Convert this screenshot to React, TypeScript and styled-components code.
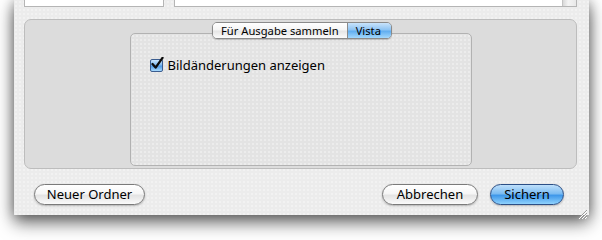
import React from 'react';
import styled, { createGlobalStyle, css } from 'styled-components';

const GlobalStyle = createGlobalStyle`
  html, body {
    margin: 0;
    padding: 0;
    background: #ffffff;
  }
  body {
    font-family: 'Noto Sans', 'DejaVu Sans', sans-serif;
  }
`;

const dots = css`
  background-image: radial-gradient(rgba(255, 255, 255, 0.5) 0.6px, transparent 0.9px);
  background-size: 4px 4px;
`;

export default function App() {
  return (
    <>
      <GlobalStyle />
      <Page>
        <SheetWindow>
          <TopRow>
            <SideList />
            <FileList>
              <ListArea />
              <ScrollTrack />
            </FileList>
          </TopRow>

          <AccessoryPanel>
            <TabStrip>
              <TabSegment>Für Ausgabe sammeln</TabSegment>
              <TabSegment $selected>Vista</TabSegment>
            </TabStrip>
            <TabBox>
              <CheckRow>
                <CheckBox>
                  <svg width="14" height="14" viewBox="0 0 14 14">
                    <path d="M2.5 7 L5.6 10.6 L12.5 0.8" fill="none" stroke="#0d0d0d" strokeWidth="2.3" strokeLinecap="round" strokeLinejoin="round" />
                  </svg>
                </CheckBox>
                <CheckLabel>Bildänderungen anzeigen</CheckLabel>
              </CheckRow>
            </TabBox>
          </AccessoryPanel>

          <Footer>
            <PushButton $width={111}>Neuer Ordner</PushButton>
            <Spacer />
            <PushButton $width={96}>Abbrechen</PushButton>
            <PushButton $width={74} $primary>Sichern</PushButton>
          </Footer>

          <Grip>
            <svg width="11" height="11" viewBox="0 0 11 11">
              <path d="M1 10 L10 1 M4 10 L10 4 M7 10 L10 7" stroke="#9a9a9a" strokeWidth="1" />
              <path d="M2 10 L10 2 M5 10 L10 5 M8 10 L10 8" stroke="#ffffff" strokeWidth="1" />
            </svg>
          </Grip>
        </SheetWindow>
      </Page>
    </>
  );
}

const Page = styled.div`
  width: 602px;
  height: 240px;
  overflow: hidden;
  padding-left: 14px;
  box-sizing: border-box;
`;

const SheetWindow = styled.div`
  position: relative;
  width: 575px;
  height: 215px;
  background-color: #ececec;
  ${dots};
  box-shadow: 0 8px 16px rgba(0, 0, 0, 0.55), 0 0 12px rgba(0, 0, 0, 0.35);
  display: flex;
  flex-direction: column;
`;

const TopRow = styled.div`
  display: flex;
  gap: 10px;
  padding: 0 12px 0 10px;
  height: 7px;
`;

const SideList = styled.div`
  width: 138px;
  background: #ffffff;
  border: 1px solid #b5b5b5;
  border-top: none;
`;

const FileList = styled.div`
  flex: 1;
  display: flex;
  border: 1px solid #b5b5b5;
  border-top: none;
  background: #ffffff;
`;

const ListArea = styled.div`
  flex: 1;
  background: #ffffff;
`;

const ScrollTrack = styled.div`
  width: 13px;
  background: linear-gradient(90deg, #d8d8d8, #f4f4f4 40%, #e8e8e8);
  border-left: 1px solid #c4c4c4;
`;

const AccessoryPanel = styled.div`
  margin: 12px 12px 0 10px;
  height: 150px;
  box-sizing: border-box;
  background-color: #dcdcdc;
  border: 1px solid #bdbdbd;
  border-radius: 7px;
  display: flex;
  flex-direction: column;
  align-items: center;
  padding-top: 2px;
`;

const TabStrip = styled.div`
  display: flex;
  height: 17px;
  margin-bottom: -6px;
  margin-left: 3px;
  position: relative;
  z-index: 1;
  border: 1px solid #8a8a8a;
  border-radius: 5px;
  overflow: hidden;
  box-sizing: border-box;
  box-shadow: 0 1px 1px rgba(0, 0, 0, 0.2);
`;

const TabSegment = styled.div<{ $selected?: boolean }>`
  display: flex;
  align-items: center;
  padding: 0 ${(p) => (p.$selected ? 10 : 8)}px 0 8px;
  font-size: 11.2px;
  line-height: 1;
  color: #000;
  background: ${(p) =>
    p.$selected
      ? 'linear-gradient(180deg, #c9e3fb 0%, #8ec4f3 45%, #61aef0 55%, #a3d8fd 100%)'
      : 'linear-gradient(180deg, #ffffff 0%, #f5f5f5 45%, #e6e6e6 55%, #fbfbfb 100%)'};
  & + & {
    border-left: 1px solid #8a8a8a;
  }
`;

const TabBox = styled.div`
  width: 342px;
  height: 133px;
  box-sizing: border-box;
  background-color: #e3e3e3;
  ${dots};
  border: 1px solid #b2b2b2;
  border-radius: 5px;
  padding: 22px 0 0 19px;
`;

const CheckRow = styled.div`
  display: flex;
  align-items: center;
  gap: 5px;
`;

const CheckBox = styled.div`
  width: 13px;
  height: 13px;
  box-sizing: border-box;
  border: 1px solid #3b5d8f;
  border-radius: 2px;
  background: linear-gradient(180deg, #cbe6fd 0%, #7fb9ee 45%, #4f9ae6 55%, #a8dafd 100%);
  display: flex;
  align-items: center;
  justify-content: center;
  svg {
    flex: none;
    margin-top: -3px;
    margin-left: 2px;
  }
`;

const CheckLabel = styled.span`
  font-size: 13px;
  color: #000;
`;

const Footer = styled.div`
  display: flex;
  align-items: center;
  gap: 12px;
  padding: 0 25px 0 20px;
  margin-top: 15px;
`;

const Spacer = styled.div`
  flex: 1;
`;

const PushButton = styled.button<{ $primary?: boolean; $width: number }>`
  all: unset;
  width: ${(p) => p.$width}px;
  height: 21px;
  box-sizing: border-box;
  border-radius: 11px;
  font-family: 'Noto Sans', 'DejaVu Sans', sans-serif;
  font-size: 13px;
  line-height: 19px;
  color: #000;
  text-align: center;
  border: 1px solid ${(p) => (p.$primary ? '#2c4f86' : '#7a7a7a')};
  background: ${(p) =>
    p.$primary
      ? 'linear-gradient(180deg, #bfe0fb 0%, #7cbcf2 45%, #3f98ea 55%, #8fd2fd 100%)'
      : 'linear-gradient(180deg, #ffffff 0%, #f6f6f6 45%, #e4e4e4 55%, #fafafa 100%)'};
  box-shadow: 0 1px 2px rgba(0, 0, 0, 0.25);
`;

const Grip = styled.div`
  position: absolute;
  right: 1px;
  bottom: 1px;
  width: 11px;
  height: 11px;
`;
